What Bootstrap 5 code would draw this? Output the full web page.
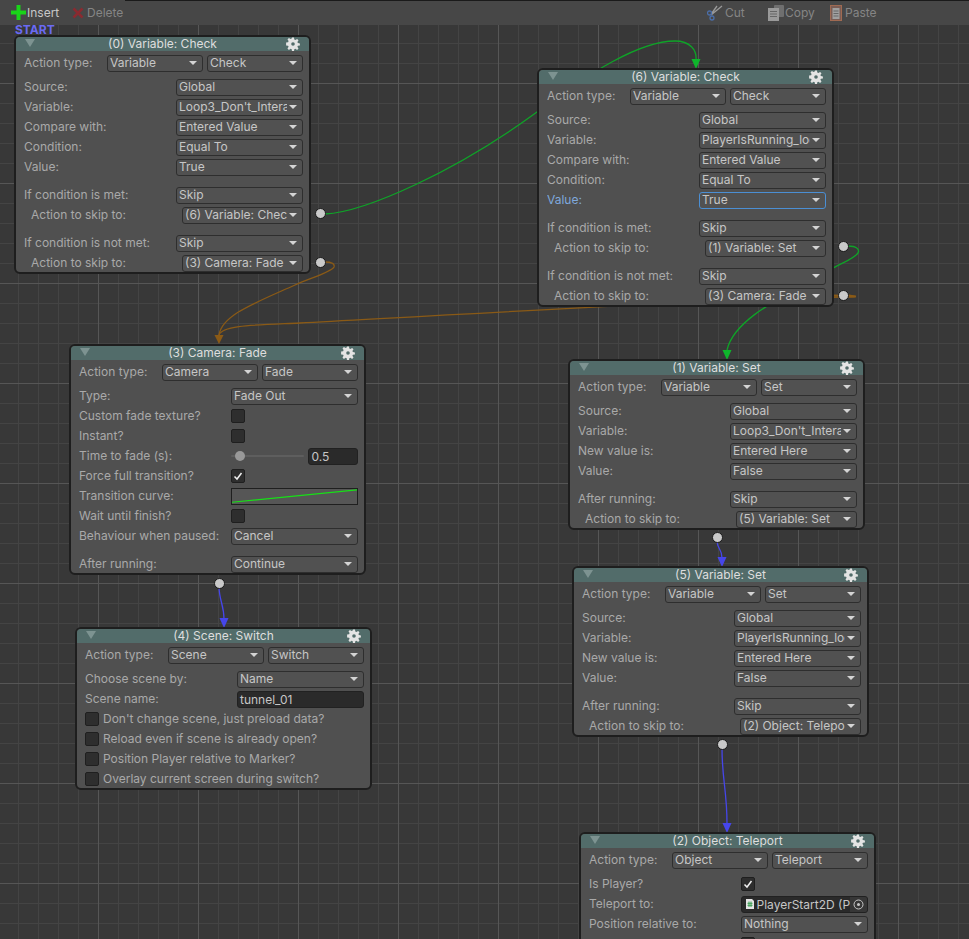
<!DOCTYPE html>
<html lang="en">
<head>
<meta charset="utf-8">
<title>ActionList Editor</title>
<link href="https://cdn.jsdelivr.net/npm/bootstrap@5.3.0/dist/css/bootstrap.min.css" rel="stylesheet">
<style>
html,body{height:100%;margin:0;overflow:hidden;background:#383838}
body{font-family:Inter,"Liberation Sans",sans-serif;font-size:12px;color:#c4c4c4}
.toolbar{height:25px;background:#474747;position:relative;padding-left:11px}
.toolbar::before{content:"";position:absolute;left:125px;right:0;top:0;height:1px;background:#1a1a1a}
.tool{color:#c8c8c8;line-height:25px;font-size:12px}
.tool.off{color:#858585}
.t-ins{width:61px}.t-del{width:635px}
.t-cut{width:61px}.t-copy{width:62px}
.ic-ins{margin-right:1px;flex:none}
.ic-del{margin-right:3px;flex:none}
.ic-cut{margin-right:2px;flex:none}
.ic-copy{flex:none}
.ic-paste{margin-right:3px;flex:none}
.canvas{position:relative;height:914px;background-color:#383838;
background-image:
linear-gradient(to bottom,#565656 1px,transparent 1px),
linear-gradient(to right,#565656 1px,transparent 1px),
linear-gradient(to bottom,#444 1px,transparent 1px),
linear-gradient(to right,#444 1px,transparent 1px);
background-size:100px 100px,100px 100px,20px 20px,20px 20px;
background-position:0 58px,98px 0,0 18px,18px 0;background-repeat:repeat}
.wires{position:absolute;left:0;top:0;width:969px;height:914px}
.start{position:absolute;left:15px;top:-2px;color:#6a6af2;font-weight:700;line-height:14px}
.node{position:absolute;width:297px;background:#505050;border:2px solid #1e1e1e;border-radius:6px;color:#a9a9a9}
#n0{left:14px;top:10px;height:239px}
#n6{left:537px;top:43px;height:239px}
#n3{left:69px;top:319px;height:231px}
#n4{left:75px;top:602px;height:163px}
#n1{left:568px;top:334px;height:171px}
#n5{left:572px;top:541px;height:171px}
#n2{left:579px;top:807px;height:140px}
.node .card-header{height:14px;padding:0;background:#526c6a;border:0;border-radius:4px 4px 0 0;color:#dedede;line-height:13px;text-align:center;position:relative}
.collapse-tri{position:absolute;left:9px;top:2px;width:0;height:0;border-left:5px solid transparent;border-right:5px solid transparent;border-top:8px solid #7d9391}
.gear{position:absolute;right:9px;top:0;width:14px;height:14px}
.node .card-body{padding:2px 6.5px 0 8px;margin-bottom:-2px}
.f{height:20px;line-height:20px;white-space:nowrap}
.lb{width:151.5px;flex:none;overflow:hidden}
.lb-a{width:82.5px;flex:none}
.lb-i{width:151.5px;flex:none;padding-left:7px}
.gap{margin-top:4px}
.gap-l{margin-top:8px}
.dd{height:17px;padding:0 0 1px 2.5px;font-size:12px;line-height:15px;text-align:left;color:#c6c6c6;background:#515151;border:1px solid #2e2e2e;border-radius:3px;overflow:hidden;white-space:nowrap;--bs-btn-hover-bg:#515151;--bs-btn-hover-color:#c6c6c6}
.dd span{flex:1;overflow:hidden;min-width:0}
.dd::after{flex:none;margin:1px 4.5px 0 2px;border-top:4px solid #d4d4d4;border-left:4px solid transparent;border-right:4px solid transparent;border-bottom:0}
.d-h{width:96px}.d-h+.d-h{margin-left:4px}
.d-f{width:127px}
.d-i{width:121.5px;margin-left:6px}
.focus-lb{color:#7fa8dc}
.dd.focus{border-color:#4b8fd4}
.ck{width:14px;height:14px;background:#2e2e2e;border:1px solid #1f1f1f;border-radius:2px;display:flex;align-items:center;justify-content:center;flex:none}
.ck svg{width:10px;height:10px}
.txt{height:17px;background:#2a2a2a;border:1px solid #212121;border-radius:3px;color:#c6c6c6;line-height:15px;padding:0 2.5px}
.slider{width:73px;height:14px;position:relative;margin-right:4.5px}
.slider::before{content:"";position:absolute;left:0;right:0;top:6px;height:2px;background:#5e5e5e;border-radius:1px}
.slider::after{content:"";position:absolute;left:4px;top:2px;width:10px;height:10px;border-radius:50%;background:#999}
.num{width:49.5px}
.curve{width:127px;height:17px;background:#565656;border:1px solid #1f1f1f;display:block}
.obj{width:127px;height:17px;background:#2a2a2a;border:1px solid #212121;border-radius:3px;overflow:hidden;color:#c6c6c6;line-height:15px}
.obj .ic-doc{margin-left:4px;margin-right:3px;flex:none}
.obj .nm{flex:1;min-width:0;overflow:hidden;white-space:nowrap}
.obj .tgt{width:17px;height:15px;background:#373737;flex:none;display:flex;align-items:center;justify-content:center}
.scene-row .ck{margin-right:4px}
.sock{position:absolute;width:11px;height:11px;background:#c9c9c9;border:1px solid #1a1a1a;border-radius:50%}
#s0{left:314.5px;top:182.5px}
#s1{left:314.5px;top:231.5px}
#s2{left:837.5px;top:215.5px}
#s3{left:837.5px;top:264.5px}
#s4{left:213.5px;top:552.5px}
#s5{left:711.5px;top:506.5px}
#s6{left:716.5px;top:713.5px}
</style>
</head>
<body>
<div class="toolbar d-flex align-items-center">
  <div class="tool t-ins d-flex align-items-center"><svg class="ic-ins" width="15" height="15" viewBox="0 0 15 15"><path d="M5.500 0h4v5.500h5.500v4h-5.500v5.500h-4v-5.500h-5.500v-4h5.500z" fill="#19d619"/></svg>Insert</div>
  <div class="tool off t-del d-flex align-items-center"><svg class="ic-del" width="12" height="12" viewBox="0 0 12 12"><path d="M1.500 1.500l9 9M10.500 1.500l-9 9" stroke="#8a2a30" stroke-width="2.600"/></svg>Delete</div>
  <div class="tool off t-cut d-flex align-items-center"><svg class="ic-cut" width="16" height="16" viewBox="0 0 16 16"><path d="M4 10L15 1M5 8l5-7" stroke="#9a9a9a" stroke-width="1.300" fill="none"/><circle cx="2.500" cy="8" r="2" fill="none" stroke="#4b6ea8" stroke-width="1.300"/><circle cx="5" cy="13" r="2" fill="none" stroke="#4b6ea8" stroke-width="1.300"/></svg>Cut</div>
  <div class="tool off t-copy d-flex align-items-center"><svg class="ic-copy" width="17" height="16" viewBox="0 0 17 16"><rect x="6" y="0" width="10" height="12" rx="1" fill="#6f6f6f"/><rect x="0" y="3" width="11" height="13" fill="#9a9a9a"/><path d="M2 6.500h7M2 9h7M2 11.500h7" stroke="#666"/></svg>Copy</div>
  <div class="tool off d-flex align-items-center"><svg class="ic-paste" width="12" height="16" viewBox="0 0 12 16"><rect x=".5" y=".5" width="11" height="15" fill="#7b5d55" stroke="#a06a52"/><rect x="2.500" y="3" width="7" height="11" fill="#a0a0a0"/><path d="M3.500 6h5M3.500 8.500h5M3.500 11h5" stroke="#666"/></svg>Paste</div>
</div>
<div class="canvas">
  <svg class="wires" viewBox="0 25 969 914" fill="none" aria-hidden="true">
    <path d="M325 214C365 212 455 172 537 112C590 72 640 41 675 41C690 41 697 50 696 60" stroke="#0fa328" stroke-width="1.300"/>
    <path d="M691.500 59h9l-4.500 10z" fill="#0fb52c"/>
    <path d="M325 262C332 262 335 264 334 267C332 272 310 278 295 285C255 303 222 315 219 335" stroke="#8a5a16" stroke-width="1.300"/>
    <path d="M848 295C860 297 855 297 840 297C700 300 430 316 300 323C255 325 222 325 219 335" stroke="#8a5a16" stroke-width="1.300"/>
    <path d="M834 295.500L856 296.500" stroke="#8a5a16" stroke-width="2"/>
    <path d="M214.500 335h9l-4.500 9z" fill="#8a5a16"/>
    <path d="M848 246C856 246 860 249 858 253C853 260 840 263 830 270C795 292 735 315 727 350" stroke="#0fa328" stroke-width="1.300"/>
    <path d="M722.500 350h9l-4.500 10z" fill="#0fb52c"/>
    <path d="M717 540C717 550 722 548 722 558" stroke="#4646ea" stroke-width="1.300"/>
    <path d="M717.500 557h9l-4.500 10z" fill="#4646ea"/>
    <path d="M722 748C722 780 727 790 727 824" stroke="#4646ea" stroke-width="1.300"/>
    <path d="M722.500 823h9l-4.500 10z" fill="#4646ea"/>
    <path d="M219 586C219 600 224 605 224 619" stroke="#4646ea" stroke-width="1.300"/>
    <path d="M219.500 618h9l-4.500 10z" fill="#4646ea"/>
  </svg>

  <div class="start">START</div>

  <!-- (0) -->
  <div class="card node" id="n0">
    <div class="card-header"><span class="collapse-tri"></span>(0) Variable: Check<svg class="gear" viewBox="0 0 14 14"><use href="#gear"/></svg></div>
    <div class="card-body">
      <div class="f d-flex align-items-center"><div class="lb-a">Action type:</div><div class="btn dd dropdown-toggle d-flex align-items-center d-h"><span>Variable</span></div><div class="btn dd dropdown-toggle d-flex align-items-center d-h"><span>Check</span></div></div>
      <div class="f d-flex align-items-center gap"><div class="lb">Source:</div><div class="btn dd dropdown-toggle d-flex align-items-center d-f"><span>Global</span></div></div>
      <div class="f d-flex align-items-center"><div class="lb">Variable:</div><div class="btn dd dropdown-toggle d-flex align-items-center d-f"><span>Loop3_Don't_Intera</span></div></div>
      <div class="f d-flex align-items-center"><div class="lb">Compare with:</div><div class="btn dd dropdown-toggle d-flex align-items-center d-f"><span>Entered Value</span></div></div>
      <div class="f d-flex align-items-center"><div class="lb">Condition:</div><div class="btn dd dropdown-toggle d-flex align-items-center d-f"><span>Equal To</span></div></div>
      <div class="f d-flex align-items-center"><div class="lb">Value:</div><div class="btn dd dropdown-toggle d-flex align-items-center d-f"><span>True</span></div></div>
      <div class="f d-flex align-items-center gap-l"><div class="lb">If condition is met:</div><div class="btn dd dropdown-toggle d-flex align-items-center d-f"><span>Skip</span></div></div>
      <div class="f d-flex align-items-center"><div class="lb-i">Action to skip to:</div><div class="btn dd dropdown-toggle d-flex align-items-center d-i"><span>(6) Variable: Chec</span></div></div>
      <div class="f d-flex align-items-center gap-l"><div class="lb">If condition is not met:</div><div class="btn dd dropdown-toggle d-flex align-items-center d-f"><span>Skip</span></div></div>
      <div class="f d-flex align-items-center"><div class="lb-i">Action to skip to:</div><div class="btn dd dropdown-toggle d-flex align-items-center d-i"><span>(3) Camera: Fade</span></div></div>
    </div>
  </div>

  <!-- (6) -->
  <div class="card node" id="n6">
    <div class="card-header"><span class="collapse-tri"></span>(6) Variable: Check<svg class="gear" viewBox="0 0 14 14"><use href="#gear"/></svg></div>
    <div class="card-body">
      <div class="f d-flex align-items-center"><div class="lb-a">Action type:</div><div class="btn dd dropdown-toggle d-flex align-items-center d-h"><span>Variable</span></div><div class="btn dd dropdown-toggle d-flex align-items-center d-h"><span>Check</span></div></div>
      <div class="f d-flex align-items-center gap"><div class="lb">Source:</div><div class="btn dd dropdown-toggle d-flex align-items-center d-f"><span>Global</span></div></div>
      <div class="f d-flex align-items-center"><div class="lb">Variable:</div><div class="btn dd dropdown-toggle d-flex align-items-center d-f"><span>PlayerIsRunning_loc</span></div></div>
      <div class="f d-flex align-items-center"><div class="lb">Compare with:</div><div class="btn dd dropdown-toggle d-flex align-items-center d-f"><span>Entered Value</span></div></div>
      <div class="f d-flex align-items-center"><div class="lb">Condition:</div><div class="btn dd dropdown-toggle d-flex align-items-center d-f"><span>Equal To</span></div></div>
      <div class="f d-flex align-items-center"><div class="lb focus-lb">Value:</div><div class="btn dd focus dropdown-toggle d-flex align-items-center d-f"><span>True</span></div></div>
      <div class="f d-flex align-items-center gap-l"><div class="lb">If condition is met:</div><div class="btn dd dropdown-toggle d-flex align-items-center d-f"><span>Skip</span></div></div>
      <div class="f d-flex align-items-center"><div class="lb-i">Action to skip to:</div><div class="btn dd dropdown-toggle d-flex align-items-center d-i"><span>(1) Variable: Set</span></div></div>
      <div class="f d-flex align-items-center gap-l"><div class="lb">If condition is not met:</div><div class="btn dd dropdown-toggle d-flex align-items-center d-f"><span>Skip</span></div></div>
      <div class="f d-flex align-items-center"><div class="lb-i">Action to skip to:</div><div class="btn dd dropdown-toggle d-flex align-items-center d-i"><span>(3) Camera: Fade</span></div></div>
    </div>
  </div>

  <!-- (3) -->
  <div class="card node" id="n3">
    <div class="card-header"><span class="collapse-tri"></span>(3) Camera: Fade<svg class="gear" viewBox="0 0 14 14"><use href="#gear"/></svg></div>
    <div class="card-body">
      <div class="f d-flex align-items-center"><div class="lb-a">Action type:</div><div class="btn dd dropdown-toggle d-flex align-items-center d-h"><span>Camera</span></div><div class="btn dd dropdown-toggle d-flex align-items-center d-h"><span>Fade</span></div></div>
      <div class="f d-flex align-items-center gap"><div class="lb">Type:</div><div class="btn dd dropdown-toggle d-flex align-items-center d-f"><span>Fade Out</span></div></div>
      <div class="f d-flex align-items-center"><div class="lb">Custom fade texture?</div><div class="ck"></div></div>
      <div class="f d-flex align-items-center"><div class="lb">Instant?</div><div class="ck"></div></div>
      <div class="f d-flex align-items-center"><div class="lb">Time to fade (s):</div><div class="slider"></div><div class="txt num">0.5</div></div>
      <div class="f d-flex align-items-center"><div class="lb">Force full transition?</div><div class="ck"><svg viewBox="0 0 10 10"><path d="M1.500 5.500L4 8L8.500 2" stroke="#f0f0f0" stroke-width="1.500" fill="none"/></svg></div></div>
      <div class="f d-flex align-items-center"><div class="lb">Transition curve:</div><svg class="curve" viewBox="0 0 127 17" preserveAspectRatio="none"><path d="M0 15L127 1" stroke="#17e017" stroke-width="1.300"/></svg></div>
      <div class="f d-flex align-items-center"><div class="lb">Wait until finish?</div><div class="ck"></div></div>
      <div class="f d-flex align-items-center"><div class="lb">Behaviour when paused:</div><div class="btn dd dropdown-toggle d-flex align-items-center d-f"><span>Cancel</span></div></div>
      <div class="f d-flex align-items-center gap-l"><div class="lb">After running:</div><div class="btn dd dropdown-toggle d-flex align-items-center d-f"><span>Continue</span></div></div>
    </div>
  </div>

  <!-- (4) -->
  <div class="card node" id="n4">
    <div class="card-header"><span class="collapse-tri"></span>(4) Scene: Switch<svg class="gear" viewBox="0 0 14 14"><use href="#gear"/></svg></div>
    <div class="card-body">
      <div class="f d-flex align-items-center"><div class="lb-a">Action type:</div><div class="btn dd dropdown-toggle d-flex align-items-center d-h"><span>Scene</span></div><div class="btn dd dropdown-toggle d-flex align-items-center d-h"><span>Switch</span></div></div>
      <div class="f d-flex align-items-center gap"><div class="lb">Choose scene by:</div><div class="btn dd dropdown-toggle d-flex align-items-center d-f"><span>Name</span></div></div>
      <div class="f d-flex align-items-center"><div class="lb">Scene name:</div><div class="txt d-f">tunnel_01</div></div>
      <div class="f d-flex align-items-center scene-row"><div class="ck"></div>Don't change scene, just preload data?</div>
      <div class="f d-flex align-items-center scene-row"><div class="ck"></div>Reload even if scene is already open?</div>
      <div class="f d-flex align-items-center scene-row"><div class="ck"></div>Position Player relative to Marker?</div>
      <div class="f d-flex align-items-center scene-row"><div class="ck"></div>Overlay current screen during switch?</div>
    </div>
  </div>

  <!-- (1) -->
  <div class="card node" id="n1">
    <div class="card-header"><span class="collapse-tri"></span>(1) Variable: Set<svg class="gear" viewBox="0 0 14 14"><use href="#gear"/></svg></div>
    <div class="card-body">
      <div class="f d-flex align-items-center"><div class="lb-a">Action type:</div><div class="btn dd dropdown-toggle d-flex align-items-center d-h"><span>Variable</span></div><div class="btn dd dropdown-toggle d-flex align-items-center d-h"><span>Set</span></div></div>
      <div class="f d-flex align-items-center gap"><div class="lb">Source:</div><div class="btn dd dropdown-toggle d-flex align-items-center d-f"><span>Global</span></div></div>
      <div class="f d-flex align-items-center"><div class="lb">Variable:</div><div class="btn dd dropdown-toggle d-flex align-items-center d-f"><span>Loop3_Don't_Intera</span></div></div>
      <div class="f d-flex align-items-center"><div class="lb">New value is:</div><div class="btn dd dropdown-toggle d-flex align-items-center d-f"><span>Entered Here</span></div></div>
      <div class="f d-flex align-items-center"><div class="lb">Value:</div><div class="btn dd dropdown-toggle d-flex align-items-center d-f"><span>False</span></div></div>
      <div class="f d-flex align-items-center gap-l"><div class="lb">After running:</div><div class="btn dd dropdown-toggle d-flex align-items-center d-f"><span>Skip</span></div></div>
      <div class="f d-flex align-items-center"><div class="lb-i">Action to skip to:</div><div class="btn dd dropdown-toggle d-flex align-items-center d-i"><span>(5) Variable: Set</span></div></div>
    </div>
  </div>

  <!-- (5) -->
  <div class="card node" id="n5">
    <div class="card-header"><span class="collapse-tri"></span>(5) Variable: Set<svg class="gear" viewBox="0 0 14 14"><use href="#gear"/></svg></div>
    <div class="card-body">
      <div class="f d-flex align-items-center"><div class="lb-a">Action type:</div><div class="btn dd dropdown-toggle d-flex align-items-center d-h"><span>Variable</span></div><div class="btn dd dropdown-toggle d-flex align-items-center d-h"><span>Set</span></div></div>
      <div class="f d-flex align-items-center gap"><div class="lb">Source:</div><div class="btn dd dropdown-toggle d-flex align-items-center d-f"><span>Global</span></div></div>
      <div class="f d-flex align-items-center"><div class="lb">Variable:</div><div class="btn dd dropdown-toggle d-flex align-items-center d-f"><span>PlayerIsRunning_loc</span></div></div>
      <div class="f d-flex align-items-center"><div class="lb">New value is:</div><div class="btn dd dropdown-toggle d-flex align-items-center d-f"><span>Entered Here</span></div></div>
      <div class="f d-flex align-items-center"><div class="lb">Value:</div><div class="btn dd dropdown-toggle d-flex align-items-center d-f"><span>False</span></div></div>
      <div class="f d-flex align-items-center gap-l"><div class="lb">After running:</div><div class="btn dd dropdown-toggle d-flex align-items-center d-f"><span>Skip</span></div></div>
      <div class="f d-flex align-items-center"><div class="lb-i">Action to skip to:</div><div class="btn dd dropdown-toggle d-flex align-items-center d-i"><span>(2) Object: Telepo</span></div></div>
    </div>
  </div>

  <!-- (2) -->
  <div class="card node" id="n2">
    <div class="card-header"><span class="collapse-tri"></span>(2) Object: Teleport<svg class="gear" viewBox="0 0 14 14"><use href="#gear"/></svg></div>
    <div class="card-body">
      <div class="f d-flex align-items-center"><div class="lb-a">Action type:</div><div class="btn dd dropdown-toggle d-flex align-items-center d-h"><span>Object</span></div><div class="btn dd dropdown-toggle d-flex align-items-center d-h"><span>Teleport</span></div></div>
      <div class="f d-flex align-items-center gap"><div class="lb">Is Player?</div><div class="ck"><svg viewBox="0 0 10 10"><path d="M1.500 5.500L4 8L8.500 2" stroke="#f0f0f0" stroke-width="1.500" fill="none"/></svg></div></div>
      <div class="f d-flex align-items-center"><div class="lb">Teleport to:</div><div class="obj d-flex align-items-center"><svg class="ic-doc" width="8" height="10" viewBox="0 0 8 10"><path d="M0 0h6l2 2v8H0z" fill="#e4e4e4"/><path d="M3 2.500v5.500M5 2.500v5.500M1.500 4.300h5M1.500 6.300h5" stroke="#2f9a4a" stroke-width=".9"/></svg><div class="nm">PlayerStart2D (P</div><div class="tgt"><svg width="11" height="11" viewBox="0 0 11 11"><circle cx="5.500" cy="5.500" r="4.500" fill="none" stroke="#c8c8c8"/><circle cx="5.500" cy="5.500" r="1.500" fill="#c8c8c8"/></svg></div></div></div>
      <div class="f d-flex align-items-center"><div class="lb">Position relative to:</div><div class="btn dd dropdown-toggle d-flex align-items-center d-f"><span>Nothing</span></div></div>
      <div class="f d-flex align-items-center"><div class="lb"></div><div class="ck"></div></div>
    </div>
  </div>

  <div class="sock" id="s0"></div><div class="sock" id="s1"></div><div class="sock" id="s2"></div><div class="sock" id="s3"></div><div class="sock" id="s4"></div><div class="sock" id="s5"></div><div class="sock" id="s6"></div>

  <svg width="0" height="0" class="position-absolute" aria-hidden="true"><defs>
    <g id="gear" fill="#e4e4e4">
      <path d="M6 1h2l.300 2 1.100.500 1.700-1.100 1.400 1.400-1.100 1.700.500 1.100 2 .300v2l-2 .300-.500 1.100 1.100 1.700-1.400 1.400-1.700-1.100-1.100.500-.300 2H6l-.300-2-1.100-.500-1.700 1.100-1.400-1.400 1.100-1.700-.500-1.100-2-.300V6l2-.300.500-1.100-1.100-1.700 1.400-1.400 1.700 1.100 1.100-.500z" transform="translate(0 -.5)"/>
      <circle cx="7" cy="7" r="1.800" fill="#526c6a"/>
    </g>
  </defs></svg>
</div>
<script src="https://cdn.jsdelivr.net/npm/bootstrap@5.3.0/dist/js/bootstrap.bundle.min.js"></script>
</body>
</html>
